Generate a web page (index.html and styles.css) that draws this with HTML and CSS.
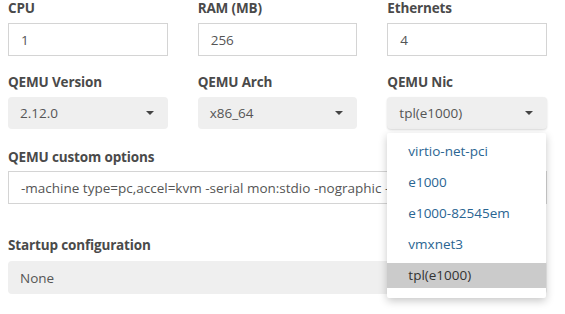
FILE: index.html
```html
<!DOCTYPE html>
<html>
<head>
<meta charset="utf-8">
<link rel="stylesheet" href="styles.css">
</head>
<body>
<div class="form">
  <div class="row row-1">
    <div class="group">
      <div class="label">CPU</div>
      <div class="input">1</div>
    </div>
    <div class="group">
      <div class="label">RAM (MB)</div>
      <div class="input">256</div>
    </div>
    <div class="group">
      <div class="label">Ethernets</div>
      <div class="input">4</div>
    </div>
  </div>
  <div class="row row-2">
    <div class="group">
      <div class="label">QEMU Version</div>
      <div class="select"><span>2.12.0</span><span class="caret"></span></div>
    </div>
    <div class="group">
      <div class="label">QEMU Arch</div>
      <div class="select"><span>x86_64</span><span class="caret"></span></div>
    </div>
    <div class="group nic">
      <div class="label">QEMU Nic</div>
      <div class="select select-open"><span>tpl(e1000)</span><span class="caret"></span></div>
      <ul class="menu">
        <li>virtio-net-pci</li>
        <li>e1000</li>
        <li>e1000-82545em</li>
        <li>vmxnet3</li>
        <li class="active">tpl(e1000)</li>
      </ul>
    </div>
  </div>
  <div class="group custom">
    <div class="label">QEMU custom options</div>
    <div class="input">-machine type=pc,accel=kvm -serial mon:stdio -nographic -nodefaults</div>
  </div>
  <div class="group startup">
    <div class="label">Startup configuration</div>
    <div class="select tall"><span>None</span></div>
  </div>
</div>
</body>
</html>
```
FILE: styles.css
```css
* { box-sizing: border-box; }
body {
  margin: 0;
  background: #fff;
  font-family: "Open Sans", "Noto Sans", sans-serif;
  font-size: 13.5px;
  color: #555;
  width: 565px;
  height: 314px;
  overflow: hidden;
}
.form {
  padding: 0 18px 0 8px;
}
.row {
  display: grid;
  grid-template-columns: repeat(3, 1fr);
  column-gap: 30px;
}
.row-1 { margin-bottom: 18px; }
.row-2 { margin-bottom: 20px; }
.group { position: relative; }
.label {
  font-weight: 700;
  color: #4a4a4a;
  line-height: 17px;
  margin-bottom: 6px;
  letter-spacing: -0.15px;
}
.input {
  height: 33px;
  border: 1px solid #d4d4d4;
  background: #fff;
  padding: 0 12px;
  display: flex;
  align-items: center;
  white-space: nowrap;
  overflow: hidden;
  color: #555;
}
.select {
  height: 32px;
  background: #efefef;
  border-radius: 4px;
  padding: 0 12px;
  display: flex;
  align-items: center;
  justify-content: space-between;
  color: #555;
}
.select.tall { height: 33px; }
.caret {
  width: 0;
  height: 0;
  border-left: 4px solid transparent;
  border-right: 4px solid transparent;
  border-top: 4px solid #444;
  margin-right: 2px;
}
.select-open {
  box-shadow: 0 1px 2px rgba(0,0,0,0.15);
}
.custom .label { margin-bottom: 5px; }
.custom { margin-bottom: 33px; }
.startup .label { margin-bottom: 7px; }
.menu {
  position: absolute;
  left: 0;
  right: 1px;
  top: 59px;
  margin: 0;
  padding: 6px 0 10px;
  list-style: none;
  background: #fff;
  border-radius: 2px;
  box-shadow: 0 3px 8px rgba(0,0,0,0.22);
  z-index: 5;
}
.menu li {
  height: 25px;
  line-height: 25px;
  padding-left: 21px;
  color: #2a6592;
}
.menu li + li { margin-top: 6px; }
.menu li.active {
  background: #cbcbcb;
  color: #333;
}
```
